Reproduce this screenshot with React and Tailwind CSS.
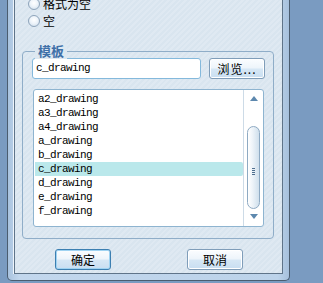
import { useMemo } from 'react';

/**
 * TemplateDialog — lower part of a Win7-basic style dialog
 * Radio options (cut off above), "模板" group with path box, browse button and list
 */
const ITEMS = ['a2_drawing', 'a3_drawing', 'a4_drawing', 'a_drawing', 'b_drawing', 'c_drawing', 'd_drawing', 'e_drawing', 'f_drawing'];

const cjk = "font-['Noto_Sans_CJK_SC','Noto_Sans',sans-serif]";
const mono = "font-['Liberation_Mono','DejaVu_Sans_Mono',monospace] text-[11px] tracking-[-0.6px]";

function Radio({ label }) {
  return (
    <div className="h-[17px] flex items-center gap-[3px] pl-[13px]">
      <div className="w-[12px] h-[12px] rounded-full border border-[#8ea4bb] bg-[radial-gradient(circle_at_50%_40%,#ffffff_0%,#eef4fa_45%,#c9d9e8_100%)]" />
      <span className={`${cjk} text-[12px] leading-none text-black`}>{label}</span>
    </div>
  );
}

function Button({ children, primary = false }) {
  return (
    <div
      className={`w-[56px] h-[21px] rounded-[3px] border flex items-center justify-center ${cjk} text-[12px] leading-none text-black bg-[linear-gradient(180deg,#fbfdff_0%,#eef5fb_45%,#d6e7f5_55%,#c8def1_100%)] ${primary ? 'border-[#3c7fb1] shadow-[inset_0_0_0_1px_#9fd3f2]' : 'border-[#7f9db9] shadow-[inset_0_0_0_1px_#ffffff]'}`}
    >
      {children}
    </div>
  );
}

export default function App() {
  const selected = 'c_drawing';
  const rows = useMemo(() => ITEMS, []);

  return (
    <div className="w-[323px] h-[283px] overflow-hidden bg-[#7a9bc1]">
      {/* Ventana: marco exterior */}
      <div className="ml-[7px] w-[283px] h-[281px] border-x border-b border-[#4b5d70] rounded-b-[5px] bg-[linear-gradient(90deg,#a9c3df_0%,#c2d7ed_4%,#bcd3ea_96%,#a6c0dc_100%)] px-[6px] pb-[6px]">
        <div className="h-full border-x border-b border-[#5f7489] shadow-[-1px_0_0_#eef5fc] bg-[#dde8f1] bg-[repeating-linear-gradient(135deg,#dfe9f2_0px,#dfe9f2_2px,#d9e5ef_2px,#d9e5ef_4px)] overflow-hidden">
          {/* Opciones (recortadas arriba) */}
          <div className="mt-[-5px]">
            <Radio label="格式为空" />
            <Radio label="空" />
          </div>

          {/* Grupo 模板 */}
          <div className="relative mt-[22px] ml-[7px] w-[252px] h-[188px] border border-[#8fadc8] rounded-[4px] pt-[6px] pl-[9px] pr-[8px]">
            <span className={`absolute left-[12px] top-[-9px] px-[3px] bg-[#dde8f1] ${cjk} text-[13px] font-bold leading-[16px] text-[#3f70a8]`}>
              模板
            </span>

            <div className="flex items-center gap-[8px]">
              <div className={`w-[169px] h-[21px] rounded-[3px] border border-[#84b9dc] bg-white pl-[3px] flex items-center ${mono} text-black`}>
                c_drawing
              </div>
              <Button>
                <span className="tracking-[1px]">浏览...</span>
              </Button>
            </div>

            {/* Lista */}
            <div className="mt-[10px] ml-[1px] w-[231px] h-[138px] border border-[#8eb4d0] rounded-[3px] bg-white flex">
              <div className="flex-1 pt-[2px] pl-[1px]">
                {rows.map((name) => (
                  <div
                    key={name}
                    className={`h-[14px] pl-[3px] flex items-center rounded-r-[2px] ${mono} text-black ${name === selected ? 'bg-[#bae8eb]' : ''}`}
                  >
                    {name}
                  </div>
                ))}
              </div>

              {/* Barra de desplazamiento */}
              <div className="w-[20px] border-l border-[#cddbe7] flex flex-col items-center pt-[6px]">
                <div className="w-0 h-0 border-x-[4px] border-x-transparent border-b-[5px] border-b-[#5d88ae]" />
                <div className="h-[25px]" />
                <div className="relative w-[13px] h-[83px] rounded-full border border-[#8eaac3] bg-[linear-gradient(90deg,#ffffff_0%,#eef4f9_40%,#cfdfec_100%)] flex flex-col items-center justify-center gap-[1px] pt-[8px]">
                  <div className="w-[3px] h-[1px] bg-[#4f6f8f]" />
                  <div className="w-[3px] h-[1px] bg-[#4f6f8f]" />
                  <div className="w-[3px] h-[1px] bg-[#4f6f8f]" />
                  <div className="w-[3px] h-[1px] bg-[#4f6f8f]" />
                </div>
                <div className="h-[5px]" />
                <div className="w-0 h-0 border-x-[4px] border-x-transparent border-t-[5px] border-t-[#5d88ae]" />
              </div>
            </div>
          </div>

          {/* Botones */}
          <div className="mt-[10px] pl-[40px] pr-[39px] flex justify-between">
            <Button primary>确定</Button>
            <Button>取消</Button>
          </div>
        </div>
      </div>
    </div>
  );
}
